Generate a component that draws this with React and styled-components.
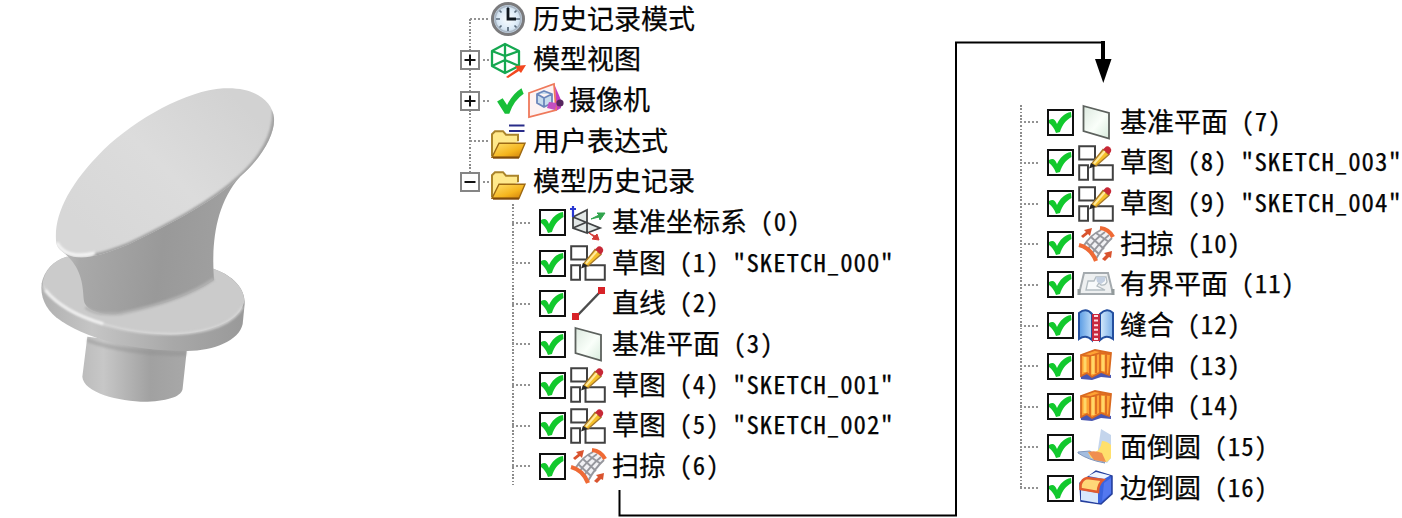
import React from 'react'
import styled, { createGlobalStyle } from 'styled-components'

const GlobalStyle = createGlobalStyle`
  body {
    margin: 0;
    background: #fff;
  }
`

const ROW = '40.65px'

const Page = styled.main`
  position: relative;
  display: grid;
  grid-template-columns: 460px 560px 1fr;
  width: 1402px;
  height: 518px;
  overflow: hidden;
  background: #fff;
  color: #050505;
  font-family: 'Noto Sans CJK SC', 'Liberation Sans', sans-serif;
  font-size: 27px;
`

const Figure = styled.div`
  padding: 70px 0 0 20px;
`

const LeftTree = styled.section`
  display: flex;
  flex-direction: column;
  margin-top: -1px;
`

const RightTree = styled.section`
  padding-top: 102px;
`

const Branch = styled.div`
  margin-left: ${props => props.$indent || 0}px;
  background-image: repeating-linear-gradient(#8b8b8b 0 1.6px, transparent 1.6px 3.375px);
  background-repeat: no-repeat;
  background-size: 2px ${props => props.$lineHeight}px;
  background-position: ${props => props.$lineX || 0}px ${props => props.$lineTop || 0}px;
`

const Row = styled.div`
  display: flex;
  align-items: center;
  height: ${ROW};
  white-space: nowrap;
`

const Stub = styled.span`
  flex: none;
  width: ${props => props.$width}px;
  height: 2px;
  margin: 0 ${props => props.$after || 0}px 0 ${props => props.$before || 0}px;
  background: repeating-linear-gradient(90deg, #929292 0 2px, transparent 2px 4px);
`

const Expander = styled.span`
  display: flex;
  flex: none;
  align-items: center;
  justify-content: center;
  box-sizing: border-box;
  width: 20px;
  height: 20px;
  border: 2px solid #858585;
  background: #fff;
`

const Check = styled.span`
  display: flex;
  flex: none;
  box-sizing: border-box;
  width: 27px;
  height: 27px;
  margin-right: 4px;
  border: 2px solid #101010;
  background: #fff;
`

const IconBox = styled.span`
  display: flex;
  flex: none;
  width: 36px;
  height: 36px;
  margin-right: ${props => props.$gap || 6}px;
`

const Label = styled.span`
  padding-bottom: 3px;
  line-height: 36px;
  -webkit-text-stroke: 0.25px #050505;
`

const Ascii = styled.span`
  font-size: 24.8px;
  letter-spacing: 1px;
  vertical-align: 1.5px;
  line-height: 1;
  white-space: pre;
  font-feature-settings: 'hwid';
`

const Connector = styled.svg`
  position: absolute;
  left: 0;
  top: 0;
  pointer-events: none;
`

const Tick = () => (
  <svg width="23" height="23" viewBox="0 0 23 23">
    <path d="M0 9 C4 7 6 8 8 13 C11 7 15 2 22 1 L22.5 6 C17 9 13 14 11 21 L7 22 C5 17 3 14 0 12Z" fill="#12c92d" />
  </svg>
)

const PlusMinus = ({ open }) => (
  <svg width="16" height="16" viewBox="0 0 16 16" stroke="#111" strokeWidth="2">
    <path d="M2.5 8h11" />
    {!open && <path d="M8 2.5v11" />}
  </svg>
)

const icons = {
  clock: (
    <>
      <circle cx="18" cy="18" r="15.5" fill="url(#clockFace)" stroke="#7b7b7d" strokeWidth="3" />
      <circle cx="18" cy="18" r="12.8" fill="none" stroke="#a9b6c4" strokeWidth="1.5" />
      <path d="M18 6v4M18 26v4M6 18h4M26 18h4M9.5 9.5l2 2M26.5 9.5l-2 2M9.5 26.5l2-2M26.5 26.5l-2-2" stroke="#5a6b7c" strokeWidth="1.7" />
      <path d="M18 7v11h8" fill="none" stroke="#101820" strokeWidth="2.8" />
    </>
  ),
  view: (
    <>
      <path d="M15 2 L29 9 V24 L15 31 L2 24 V9Z M2 9 L15 14 L29 9 M15 2 V31 M2 24 L15 18 L29 24" fill="none" stroke="#15a850" strokeWidth="2.3" strokeLinejoin="round" />
      <path d="M16 35 L27 27 L25 24 L36 23 L31 31 L29 29 L18 36Z" fill="#f34820" />
    </>
  ),
  camera: (
    <>
      <path d="M28 3 L34 17 V25 L29 28Z" fill="#c43cc0" />
      <path d="M2 10 L27 1 L29 27 L2 34Z" fill="#fdf3f3" stroke="#ef795b" strokeWidth="1.8" />
      <path d="M17 8 L25 11 V20 L17 24 L10 20 V11Z M10 11 L17 15 L25 11 M17 15 V24" fill="#c8dced" stroke="#6b86bb" strokeWidth="1.8" strokeLinejoin="round" />
      <path d="M22 19l8 1-2 7-8-2z" fill="#c44fc1" />
      <circle cx="33" cy="20" r="3.6" fill="#57265f" />
    </>
  ),
  folder: (
    <g transform="translate(0 2.2)">
      <path d="M2 31 V9 L5 6 H13 L16 9.5 H28 V16" fill="#ffe98c" stroke="#aa842b" strokeWidth="2" />
      <path d="M2 32 L9 18 H35 L29 32Z" fill="url(#folderFront)" stroke="#9c6813" strokeWidth="1.4" />
      <path d="M3 32.5 H29" stroke="#814b0b" strokeWidth="2" />
    </g>
  ),
  csys: (
    <>
      <path d="M3 12 L17 5 V28 L3 23Z M3 12 L30 23 L17 28 M3 23 L17 17" fill="#d6dddc" fillOpacity=".7" stroke="#414344" strokeWidth="1.8" />
      <path d="M3 12V1M0 4h6" stroke="#2837d2" strokeWidth="2.2" />
      <path d="M21 14 L29 10 L27 8 L35 8 L30 15 L29 12Z" fill="#31a44d" stroke="#31a44d" />
      <path d="M19 28 L25 31 L27 29 L29 35 L22 34 L24 32Z" fill="#d33a35" stroke="#d33a35" />
    </>
  ),
  sketch: (
    <>
      <path d="M1.2 1.2H17V14.5H1.2Z M1.2 20.3H10V34.8H1.2Z M15.5 20.3H34.8V34.8H15.5Z" fill="#fff" stroke="#414141" strokeWidth="2" />
      <path d="M13.5 19 L25 4.5 L31 9.5 L18 21Z" fill="#f5c02a" stroke="#a8792a" strokeWidth="1.3" />
      <path d="M16 18.5 L27 6" stroke="#ffeaa0" strokeWidth="2" />
      <path d="M25 4.5 L28 1.5 Q30 .5 32 2.5 L33 4 Q34 6 31 9.5Z" fill="#c72836" />
      <path d="M13 18l-2 5.5 7-2.5z" fill="#262626" />
    </>
  ),
  line: (
    <>
      <path d="M6 31L31 5" stroke="#4c4c4c" strokeWidth="2.5" />
      <path d="M2 27h7v7H2zM28 1h7v7h-7z" fill="#d82328" />
    </>
  ),
  plane: <path d="M5.5 2L31 9V34.5L5.5 27Z" fill="url(#planeFill)" stroke="#5c615d" strokeWidth="1.8" />,
  sweep: (
    <>
      <path d="M22 3L35 11L18 34L3 20Z" fill="#f1f1f4" />
      <path d="M23 4Q12 9 5 21M27 6Q17 13 9 24M31 9Q21 17 13 29M34 12Q25 20 18 33M18 7l13 9M13 11l13 12M8 16l13 12" fill="none" stroke="#96979d" strokeWidth="1.9" />
      <path d="M1 19Q13 22 18 35M22 2Q31 3 35 11" fill="none" stroke="#ef6a35" strokeWidth="4.2" />
      <path d="M3 10L8 6L6 4L14 2L12 10L10 8L5 12ZM24 33L28 29L26 27L34 25L33 32L31 31L27 35Z" fill="#d9532e" />
    </>
  ),
  bounded: (
    <>
      <path d="M6 6H30L35 27H1Z" fill="#eef0f1" stroke="#a4aaae" strokeWidth="2" />
      <path d="M1 22V28M35 22V28" stroke="#929a9b" strokeWidth="3" />
      <path d="M8 23L10 14H16L18 10H28L29 15Q27 19 23 18L21 16L19 19L27 23Z" fill="#f8fafb" stroke="#b3bcc1" strokeWidth="1.3" />
      <path d="M18 10h9v4l-4 3-4-2z" fill="#c3cfe0" />
    </>
  ),
  sew: (
    <>
      <path d="M1 5Q8-1 14 6V32Q8 26 1 31ZM22 6Q29-1 35 5V31Q28 26 22 32Z" fill="url(#bookFill)" stroke="#244f9f" strokeWidth="2" />
      <path d="M14 6h8v27h-8z" fill="#c8293f" />
      <path d="M18 7V33" stroke="#ffdce1" strokeWidth="4" strokeDasharray="2 2.6" />
    </>
  ),
  extrude: (
    <>
      <path d="M3 28L9 24L13 28L22 24L33 27V30L23 29L14 32L3 31Z" fill="#4a57b1" />
      <path d="M3 7L17 2L33 5L31 27L23 24L14 29L9 25L3 28Z" fill="#ffa334" stroke="#d96a20" strokeWidth="1.8" />
      <path d="M4 7L12 8L22 5L32 6M12 8V27M18 6V25M22 5V24M28 6V25" stroke="#dc6b20" strokeWidth="1.8" fill="none" />
      <path d="M7 9V24M15 8V26M25 7V23" stroke="#ffd768" strokeWidth="3" />
    </>
  ),
  faceBlend: (
    <>
      <path d="M23 0L33 6V29L29 34L20 30V20Z" fill="#c4d5ec" />
      <path d="M0 23L12 22L27 34Q10 31 0 24Z" fill="#a4bddf" stroke="#8198bd" />
      <path d="M24 12Q29 12 33 16V29L29 33L13 29L10 23Q22 26 24 12Z" fill="#ffe06c" />
      <path d="M10 23Q17 21 24 24L28 33L16 31Z" fill="#f08f50" />
    </>
  ),
  edgeBlend: (
    <>
      <path d="M2 13L18 1L34 6V24L23 34L3 31Z" fill="#3a63de" stroke="#263f9b" strokeWidth="1.5" />
      <path d="M10 6L18 2L32 5.5L26 9Z" fill="#eef5ff" />
      <path d="M3 20L20 23V33L3 30Z" fill="#d8e8fc" />
      <path d="M2.5 19V15Q4 9 9 8L25 10Q20 14 20 22Z" fill="#ffd878" stroke="#e35b2e" strokeWidth="2.6" />
      <path d="M26 13L33 8V23L24 31Z" fill="#5478ef" />
    </>
  )
}

const Icon = ({ name, gap, equals }) => (
  <IconBox $gap={gap}>
    <svg width="36" height="36" viewBox="0 0 36 36" overflow="visible">
      {icons[name]}
      {equals && <path d="M19 2.5H34.5M19 8H34.5" stroke="#292c89" strokeWidth="2.2" />}
    </svg>
  </IconBox>
)

const Defs = () => (
  <defs>
    <radialGradient id="clockFace">
      <stop stopColor="#fafdff" />
      <stop offset=".6" stopColor="#deecf8" />
      <stop offset="1" stopColor="#b9cbdc" />
    </radialGradient>
    <linearGradient id="folderFront" x2="1" y2="1">
      <stop stopColor="#ffe16e" />
      <stop offset=".6" stopColor="#f5b51e" />
      <stop offset="1" stopColor="#cd7b09" />
    </linearGradient>
    <linearGradient id="planeFill" x2="1" y2="1">
      <stop stopColor="#dce9df" />
      <stop offset=".55" stopColor="#fafffa" />
      <stop offset="1" stopColor="#d7ebdc" />
    </linearGradient>
    <linearGradient id="bookFill">
      <stop stopColor="#599be4" />
      <stop offset=".55" stopColor="#e8f6ff" />
      <stop offset="1" stopColor="#78aee9" />
    </linearGradient>
  </defs>
)

const Part = () => (
  <svg width="280" height="350" viewBox="0 0 840 1050">
    <defs>
      <linearGradient id="stem">
        <stop stopColor="#bcbcbc" />
        <stop offset=".2" stopColor="#c7c7c7" />
        <stop offset=".65" stopColor="#a1a1a1" />
        <stop offset="1" stopColor="#a8a8a8" />
      </linearGradient>
      <linearGradient id="rim">
        <stop stopColor="#b0b0b0" />
        <stop offset=".25" stopColor="#c5c5c5" />
        <stop offset=".65" stopColor="#a8a8a8" />
        <stop offset="1" stopColor="#999" />
      </linearGradient>
      <linearGradient id="neck" x1="0" x2="1" y1=".1" y2=".2">
        <stop stopColor="#c6c6c6" />
        <stop offset=".15" stopColor="#a9a9a9" />
        <stop offset=".6" stopColor="#999" />
        <stop offset="1" stopColor="#a1a1a1" />
      </linearGradient>
      <linearGradient id="face" x1=".1" y1=".8" x2=".9" y2=".15">
        <stop stopColor="#d7d7d7" />
        <stop offset=".5" stopColor="#dcdcdc" />
        <stop offset="1" stopColor="#d2d2d2" />
      </linearGradient>
      <clipPath id="faceClip">
        <path d="M108 510C103 430 150 340 250 240C350 145 500 62 610 55C702 50 757 91 762 144C766 192 725 264 660 320C580 395 450 462 330 521C250 554 201 568 160 560C130 553 107 535 108 510Z" />
      </clipPath>
      <filter id="soft"><feGaussianBlur stdDeviation="3" /></filter>
    </defs>
    <path d="M202 800L187 920C190 968 300 996 382 995C448 993 487 978 488 955L501 835Z" fill="url(#stem)" />
    <path d="M202 804C280 834 390 843 500 842L498 858C400 861 280 846 201 817Z" fill="#8d8d8d" opacity=".4" filter="url(#soft)" />
    <path d="M65 640C72 602 100 572 140 560L580 596C640 617 675 655 674 701L668 762C657 812 583 842 501 843C344 844 195 808 108 742C76 714 60 680 65 640Z" fill="url(#rim)" />
    <path d="M68 638C74 600 104 570 140 560L580 596C643 618 678 661 672 698C659 748 586 785 472 793C323 797 184 752 108 690C82 669 68 652 68 638Z" fill="#cbcbcb" />
    <path d="M69 648C86 686 160 736 257 765C331 786 402 794 470 792C573 786 642 758 668 710" fill="none" stroke="#dadada" strokeWidth="6" filter="url(#soft)" />
    <path d="M76 660C116 710 182 742 250 761" fill="none" stroke="#f4f4f4" strokeWidth="8" filter="url(#soft)" />
    <path d="M125 542C180 588 188 630 191 687C193 714 224 734 288 733C390 715 503 684 582 630C575 535 581 409 660 320L420 420Z" fill="url(#neck)" />
    <path d="M196 712C224 735 267 733 300 731C400 711 510 678 582 627" fill="none" stroke="#b3b3b3" strokeWidth="9" filter="url(#soft)" />
    <path d="M108 510C103 430 150 340 250 240C350 145 500 62 610 55C702 50 757 91 762 144C766 192 725 264 660 320C580 395 450 462 330 521C250 554 201 568 160 560C130 553 107 535 108 510Z" fill="url(#face)" />
    <g clipPath="url(#faceClip)">
      <path d="M765 120C770 192 725 268 660 324C580 399 450 466 330 525C290 541 250 555 220 560" fill="none" stroke="#a2a2a2" strokeWidth="18" filter="url(#soft)" />
      <path d="M111 518C129 552 164 564 225 549" fill="none" stroke="#f6f6f6" strokeWidth="9" filter="url(#soft)" />
    </g>
  </svg>
)

const features = [
  ['csys', '基准坐标系', '(0)'],
  ['sketch', '草图', '(1) "SKETCH_000"'],
  ['line', '直线', '(2)'],
  ['plane', '基准平面', '(3)'],
  ['sketch', '草图', '(4) "SKETCH_001"'],
  ['sketch', '草图', '(5) "SKETCH_002"'],
  ['sweep', '扫掠', '(6)'],
  ['plane', '基准平面', '(7)'],
  ['sketch', '草图', '(8) "SKETCH_003"'],
  ['sketch', '草图', '(9) "SKETCH_004"'],
  ['sweep', '扫掠', '(10)'],
  ['bounded', '有界平面', '(11)'],
  ['sew', '缝合', '(12)'],
  ['extrude', '拉伸', '(13)'],
  ['extrude', '拉伸', '(14)'],
  ['faceBlend', '面倒圆', '(15)'],
  ['edgeBlend', '边倒圆', '(16)']
]

const Feature = ({ item: [icon, name, suffix] }) => (
  <Row>
    <Stub $width={19} $after={8} />
    <Check><Tick /></Check>
    <Icon name={icon} />
    <Label>{name}<Ascii>{' ' + suffix}</Ascii></Label>
  </Row>
)

export default function App() {
  return (
    <Page>
      <GlobalStyle />
      <Figure><Part /></Figure>
      <LeftTree>
        <Branch $lineX={9} $lineTop={20} $lineHeight={162}>
          <Row>
            <Stub $width={18} $before={10} $after={2} />
            <Icon name="clock" gap={7} />
            <Label>历史记录模式</Label>
          </Row>
          <Row>
            <Expander><PlusMinus /></Expander>
            <Stub $width={7} $before={3} />
            <Icon name="view" gap={7} />
            <Label>模型视图</Label>
          </Row>
          <Row>
            <Expander><PlusMinus /></Expander>
            <Stub $width={7} $before={3} $after={6} />
            <svg width="31" height="28" viewBox="-1 -1 28 25">
              <path d="M0 12L5 9L9 15Q14 5 22 0L24 5Q15 11 11 23L7 23Z" fill="#18bf38" />
            </svg>
            <Icon name="camera" gap={6} />
            <Label>摄像机</Label>
          </Row>
          <Row>
            <Stub $width={18} $before={10} $after={2} />
            <Icon name="folder" gap={7} equals />
            <Label>用户表达式</Label>
          </Row>
          <Row>
            <Expander><PlusMinus open /></Expander>
            <Stub $width={7} $before={3} />
            <Icon name="folder" gap={7} />
            <Label>模型历史记录</Label>
          </Row>
        </Branch>
        <Branch $indent={52} $lineTop={2} $lineHeight={281}>
          {features.slice(0, 7).map(item => <Feature key={item[2]} item={item} />)}
        </Branch>
      </LeftTree>
      <RightTree>
        <Branch $lineTop={3} $lineHeight={384}>
          {features.slice(7).map(item => <Feature key={item[2]} item={item} />)}
        </Branch>
      </RightTree>
      <Connector width="1402" height="518" viewBox="0 0 1402 518">
        <Defs />
        <path d="M619.5 490V515.5H956V42.5H1103" fill="none" stroke="#000" strokeWidth="2" />
        <path d="M1103 41V62" stroke="#000" strokeWidth="4" />
        <path d="M1095 59H1111.5L1103.3 83Z" fill="#000" />
      </Connector>
    </Page>
  )
}
